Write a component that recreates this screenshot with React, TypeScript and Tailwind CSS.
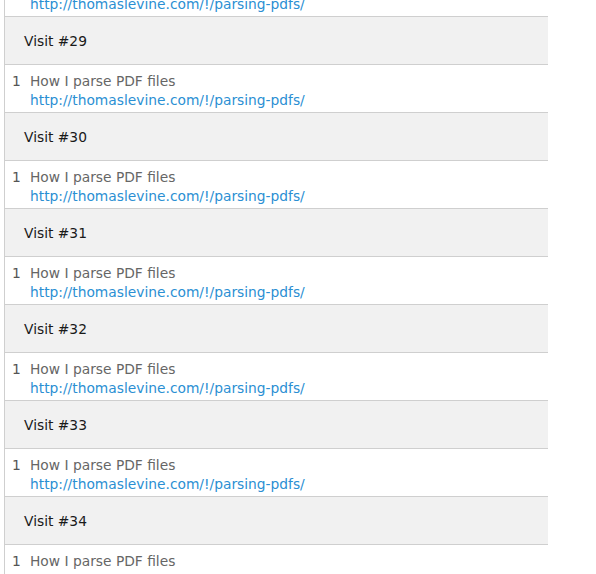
import React from "react";

const visits = [29, 30, 31, 32, 33, 34];

function Item() {
  return (
    <div className="h-[48px] border-b border-[#cfcfcf] flex pt-[7px] leading-[19px] text-[13.8px] bg-white">
      <div className="w-[25px] pl-[7px] text-[#555]">1</div>
      <div className="flex flex-col">
        <span className="text-[#666]">How I parse PDF files</span>
        <a className="text-[#2b8fd3]" href="#">http://thomaslevine.com/!/parsing-pdfs/</a>
      </div>
    </div>
  );
}

function Header({ n }: { n: number }) {
  return (
    <div className="h-[48px] border-b border-[#cfcfcf] bg-[#f1f1f1] flex items-center pt-[2px] pl-[19px] text-[13.8px] text-[#1a1a1a]">
      Visit #{n}
    </div>
  );
}

export default function App() {
  return (
    <div className="h-[574px] overflow-hidden bg-white" style={{ fontFamily: '"DejaVu Sans", sans-serif' }}>
      <div className="ml-[4px] w-[544px] border-l border-[#cfcfcf] -mt-[31px]">
        <Item />
        {visits.map((n) => (
          <React.Fragment key={n}>
            <Header n={n} />
            <Item />
          </React.Fragment>
        ))}
      </div>
    </div>
  );
}
